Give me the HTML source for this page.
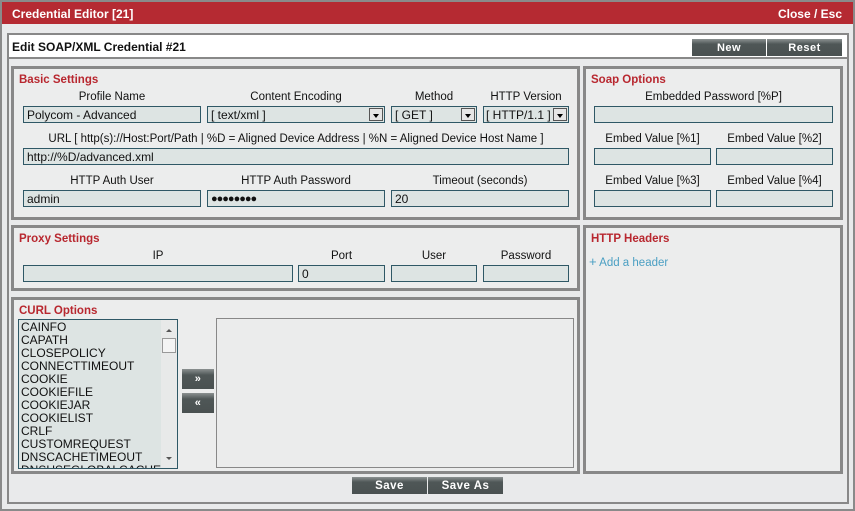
<!DOCTYPE html>
<html><head><style>
*{box-sizing:border-box;margin:0;padding:0}
body{width:855px;height:511px;background:#e9eaeb;font-family:"Liberation Sans",Arial,sans-serif;font-size:11px;color:#111;position:relative;overflow:hidden}
.a{position:absolute}
.frame{left:0;top:0;width:855px;height:511px;border:2px solid #8a8a8a}
.title{left:2px;top:2px;width:851px;height:22px;background:#b52a32;color:#fff;font-weight:bold;font-size:12px;line-height:24px;padding:0 10px}
.inner{left:7px;top:33px;width:842px;height:471px;border:2px solid #888}
.hdr{left:9px;top:35px;width:838px;height:24px;background:#fff;border-bottom:2px solid #888;font-weight:bold;font-size:12px;line-height:24px;padding-left:3px}
.btn{background:linear-gradient(#8b9191,#4f5757 30%,#4a5151);color:#fff;font-weight:bold;text-align:center;font-size:11px;line-height:19px;letter-spacing:.5px}
.pan{border:3px solid #888;background:#eceded}
.pt{color:#b8272f;font-weight:bold;font-size:11.5px}
.lb{text-align:center;font-size:11.5px}
.in{background:#dde4e3;border:1px solid #2f5866;height:17px;line-height:16px;padding-left:3px;font-size:12px}
.dd{position:absolute;right:1px;top:1px;width:14px;height:13px;background:#e6e6e6;border:1px solid #555}
.dd:after{content:"";position:absolute;left:3px;top:5px;border:3px solid transparent;border-top:4px solid #000}
.li div{line-height:13px;font-size:12px;padding-left:2px}
</style></head><body>
<div class="a frame"></div>
<div class="a title">Credential Editor [21]<span style="position:absolute;right:11px">Close / Esc</span></div>
<div class="a inner"></div>
<div class="a hdr">Edit SOAP/XML Credential #21</div>
<div class="a btn" style="left:692px;top:39px;width:74px;height:17px">New</div>
<div class="a btn" style="left:767px;top:39px;width:75px;height:17px">Reset</div>

<div class="a pan" style="left:11px;top:66px;width:569px;height:154px"></div>
<div class="a pt" style="left:19px;top:74px">Basic Settings</div>
<div class="a lb" style="left:23px;top:91px;width:178px">Profile Name</div>
<div class="a lb" style="left:207px;top:91px;width:178px">Content Encoding</div>
<div class="a lb" style="left:391px;top:91px;width:86px">Method</div>
<div class="a lb" style="left:483px;top:91px;width:86px">HTTP Version</div>
<div class="a in" style="left:23px;top:106px;width:178px">Polycom - Advanced</div>
<div class="a in" style="left:207px;top:106px;width:178px">[ text/xml ]<span class="dd"></span></div>
<div class="a in" style="left:391px;top:106px;width:86px">[ GET ]<span class="dd"></span></div>
<div class="a in" style="left:483px;top:106px;width:86px;font-size:12px;padding-left:2px">[ HTTP/1.1 ]<span class="dd"></span></div>
<div class="a lb" style="left:23px;top:133px;width:546px">URL [ http(s)://Host:Port/Path | %D = Aligned Device Address | %N = Aligned Device Host Name ]</div>
<div class="a in" style="left:23px;top:148px;width:546px">http://%D/advanced.xml</div>
<div class="a lb" style="left:23px;top:175px;width:178px">HTTP Auth User</div>
<div class="a lb" style="left:207px;top:175px;width:178px">HTTP Auth Password</div>
<div class="a lb" style="left:391px;top:175px;width:178px">Timeout (seconds)</div>
<div class="a in" style="left:23px;top:190px;width:178px">admin</div>
<div class="a in" style="left:207px;top:190px;width:178px;font-size:11px;letter-spacing:-1px">●●●●●●●●</div>
<div class="a in" style="left:391px;top:190px;width:178px">20</div>

<div class="a pan" style="left:583px;top:66px;width:260px;height:154px"></div>
<div class="a pt" style="left:591px;top:74px">Soap Options</div>
<div class="a lb" style="left:594px;top:91px;width:239px">Embedded Password [%P]</div>
<div class="a in" style="left:594px;top:106px;width:239px"></div>
<div class="a lb" style="left:594px;top:133px;width:117px">Embed Value [%1]</div>
<div class="a lb" style="left:716px;top:133px;width:117px">Embed Value [%2]</div>
<div class="a in" style="left:594px;top:148px;width:117px"></div>
<div class="a in" style="left:716px;top:148px;width:117px"></div>
<div class="a lb" style="left:594px;top:175px;width:117px">Embed Value [%3]</div>
<div class="a lb" style="left:716px;top:175px;width:117px">Embed Value [%4]</div>
<div class="a in" style="left:594px;top:190px;width:117px"></div>
<div class="a in" style="left:716px;top:190px;width:117px"></div>

<div class="a pan" style="left:11px;top:225px;width:569px;height:66px"></div>
<div class="a pt" style="left:19px;top:233px">Proxy Settings</div>
<div class="a lb" style="left:23px;top:250px;width:270px">IP</div>
<div class="a lb" style="left:298px;top:250px;width:87px">Port</div>
<div class="a lb" style="left:391px;top:250px;width:86px">User</div>
<div class="a lb" style="left:483px;top:250px;width:86px">Password</div>
<div class="a in" style="left:23px;top:265px;width:270px"></div>
<div class="a in" style="left:298px;top:265px;width:87px">0</div>
<div class="a in" style="left:391px;top:265px;width:86px"></div>
<div class="a in" style="left:483px;top:265px;width:86px"></div>

<div class="a pan" style="left:583px;top:225px;width:260px;height:249px"></div>
<div class="a pt" style="left:591px;top:233px">HTTP Headers</div>
<div class="a" style="left:589px;top:254px;color:#4a9fc3;font-size:11.5px"><span style="font-size:13px">+</span> Add a header</div>

<div class="a pan" style="left:11px;top:297px;width:569px;height:177px"></div>
<div class="a pt" style="left:19px;top:305px">CURL Options</div>
<div class="a li" style="left:18px;top:319px;width:160px;height:150px;background:#dde4e3;border:1px solid #2f5866;overflow:hidden;padding-top:1px">
<div>CAINFO</div><div>CAPATH</div><div>CLOSEPOLICY</div><div>CONNECTTIMEOUT</div><div>COOKIE</div><div>COOKIEFILE</div><div>COOKIEJAR</div><div>COOKIELIST</div><div>CRLF</div><div>CUSTOMREQUEST</div><div>DNSCACHETIMEOUT</div><div>DNSUSEGLOBALCACHE</div>
<span class="a" style="right:0;top:0;width:16px;height:148px;background:#e8e9e9"></span>
<span class="a" style="right:1px;top:18px;width:14px;height:15px;background:#f4f4f4;border:1px solid #999"></span>
<span class="a" style="right:5px;top:6px;border:3px solid transparent;border-bottom:3px solid #555"></span>
<span class="a" style="right:5px;top:137px;border:3px solid transparent;border-top:3px solid #555"></span>
</div>
<div class="a btn" style="left:182px;top:369px;width:32px;height:20px;line-height:21px">»</div>
<div class="a btn" style="left:182px;top:393px;width:32px;height:20px;line-height:21px">«</div>
<div class="a" style="left:216px;top:318px;width:358px;height:150px;border:1px solid #888;background:#ebecec"></div>

<div class="a btn" style="left:352px;top:477px;width:75px;height:17px;font-size:11.5px">Save</div>
<div class="a btn" style="left:428px;top:477px;width:75px;height:17px;font-size:11.5px">Save As</div>
</body></html>
